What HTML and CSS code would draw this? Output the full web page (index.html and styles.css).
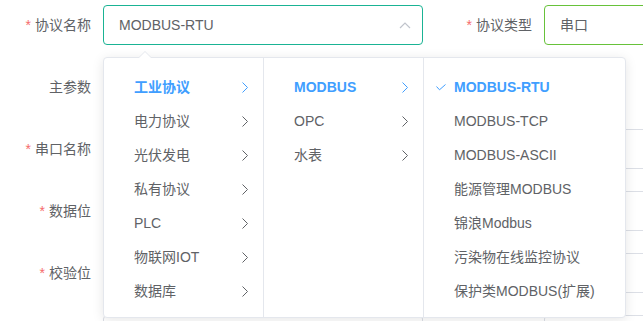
FILE: index.html
```html
<!DOCTYPE html>
<html><head>
  <meta charset="utf-8">
  <title>协议配置</title>
  <link rel="stylesheet" href="styles.css">
</head>
<body>

<div class="form">
  <label class="lbl req">协议名称</label>
  <div class="inp focus">
    <span>MODBUS-RTU</span>
    <svg class="caret" width="12" height="7" viewBox="0 0 12 7"><polyline points="1,6 6,1 11,6" fill="none" stroke="#c0c4cc" stroke-width="1.2"/></svg>
  </div>
  <label class="lbl req">协议类型</label>
  <div class="inp ok"><span>串口</span></div>

  <label class="lbl">主参数</label>
  <div></div><div></div><div></div>

  <label class="lbl req">串口名称</label>
  <div class="inp"></div>
  <label class="lbl"></label>
  <div class="inp"></div>

  <label class="lbl req">数据位</label>
  <div class="inp"></div>
  <label class="lbl"></label>
  <div class="inp"></div>

  <label class="lbl req">校验位</label>
  <div class="inp"></div>
  <label class="lbl"></label>
  <div class="inp"></div>

  <label class="lbl"></label>
  <div class="inp"></div>
  <label class="lbl"></label>
  <div class="inp"></div>
</div>

<div class="cascader">
  <i class="arrow"></i>
  <ul class="menu">
    <li class="node active">工业协议<svg class="next" width="6" height="11" viewBox="0 0 6 11"><polyline points="0.5,0.5 5.5,5.5 0.5,10.5"/></svg></li>
    <li class="node">电力协议<svg class="next" width="6" height="11" viewBox="0 0 6 11"><polyline points="0.5,0.5 5.5,5.5 0.5,10.5"/></svg></li>
    <li class="node">光伏发电<svg class="next" width="6" height="11" viewBox="0 0 6 11"><polyline points="0.5,0.5 5.5,5.5 0.5,10.5"/></svg></li>
    <li class="node">私有协议<svg class="next" width="6" height="11" viewBox="0 0 6 11"><polyline points="0.5,0.5 5.5,5.5 0.5,10.5"/></svg></li>
    <li class="node">PLC<svg class="next" width="6" height="11" viewBox="0 0 6 11"><polyline points="0.5,0.5 5.5,5.5 0.5,10.5"/></svg></li>
    <li class="node">物联网IOT<svg class="next" width="6" height="11" viewBox="0 0 6 11"><polyline points="0.5,0.5 5.5,5.5 0.5,10.5"/></svg></li>
    <li class="node">数据库<svg class="next" width="6" height="11" viewBox="0 0 6 11"><polyline points="0.5,0.5 5.5,5.5 0.5,10.5"/></svg></li>
  </ul>
  <ul class="menu">
    <li class="node active">MODBUS<svg class="next" width="6" height="11" viewBox="0 0 6 11"><polyline points="0.5,0.5 5.5,5.5 0.5,10.5"/></svg></li>
    <li class="node">OPC<svg class="next" width="6" height="11" viewBox="0 0 6 11"><polyline points="0.5,0.5 5.5,5.5 0.5,10.5"/></svg></li>
    <li class="node">水表<svg class="next" width="6" height="11" viewBox="0 0 6 11"><polyline points="0.5,0.5 5.5,5.5 0.5,10.5"/></svg></li>
  </ul>
  <ul class="menu last">
    <li class="node active"><svg class="check" width="10" height="7" viewBox="0 0 10 7"><polyline points="0.5,2.5 3.5,5.8 9.5,0.5"/></svg>MODBUS-RTU</li>
    <li class="node">MODBUS-TCP</li>
    <li class="node">MODBUS-ASCII</li>
    <li class="node">能源管理MODBUS</li>
    <li class="node">锦浪Modbus</li>
    <li class="node">污染物在线监控协议</li>
    <li class="node">保护类MODBUS(扩展)</li>
  </ul>
</div>

</body></html>
```

FILE: styles.css
```css
html, body {
  margin: 0;
  padding: 0;
  background: #fff;
  color: #606266;
  font: 14px/1 "Liberation Sans", "Noto Sans CJK SC", sans-serif;
  width: 643px;
  height: 321px;
  overflow: hidden;
}

.form {
  display: grid;
  grid-template-columns: 103px 320px 121px 320px;
  grid-auto-rows: 40px;
  row-gap: 22px;
  padding-top: 5px;
  width: 643px;
  height: 316px;
  overflow: hidden;
}

.lbl {
  display: flex;
  align-items: center;
  justify-content: flex-end;
  padding-right: 12px;
  color: #606266;
}
.req::before {
  content: "*";
  color: #f56c6c;
  margin-right: 4px;
}

.inp {
  position: relative;
  box-sizing: border-box;
  height: 40px;
  border: 1px solid #dcdfe6;
  border-radius: 4px;
  padding: 0 15px;
  display: flex;
  align-items: center;
  background: #fff;
}
.inp.focus { border-color: #1ab394; }
.inp.ok { border-color: #67c23a; }
.caret {
  position: absolute;
  right: 11px;
  top: 16px;
}

.cascader {
  position: absolute;
  left: 103px;
  top: 57px;
  height: 259px;
  display: flex;
  background: #fff;
  border: 1px solid #e4e7ed;
  border-radius: 4px;
  box-shadow: 0 2px 12px 0 rgba(0, 0, 0, .1);
}
.arrow {
  position: absolute;
  left: 35px;
  top: -7px;
  width: 0;
  height: 0;
  border: 6px solid transparent;
  border-top-width: 0;
  border-bottom-color: #e4e7ed;
}
.arrow::after {
  content: "";
  position: absolute;
  left: -6px;
  top: 1px;
  border: 6px solid transparent;
  border-top-width: 0;
  border-bottom-color: #fff;
}

.menu {
  list-style: none;
  margin: 0;
  padding: 12px 0 9px;
  width: 159px;
  border-right: 1px solid #e4e7ed;
}
.menu.last {
  width: 201px;
  border-right: 0;
}

.node {
  position: relative;
  height: 34px;
  line-height: 34px;
  padding-left: 30px;
  white-space: nowrap;
  color: #606266;
}
.node.active {
  color: #409eff;
  font-weight: bold;
}
.next {
  position: absolute;
  right: 15px;
  top: 12px;
  fill: none;
  stroke: #606266;
  stroke-width: 1;
}
.active .next { stroke: #409eff; }
.check {
  position: absolute;
  left: 12px;
  top: 14px;
  fill: none;
  stroke: #409eff;
  stroke-width: 1;
}
```
